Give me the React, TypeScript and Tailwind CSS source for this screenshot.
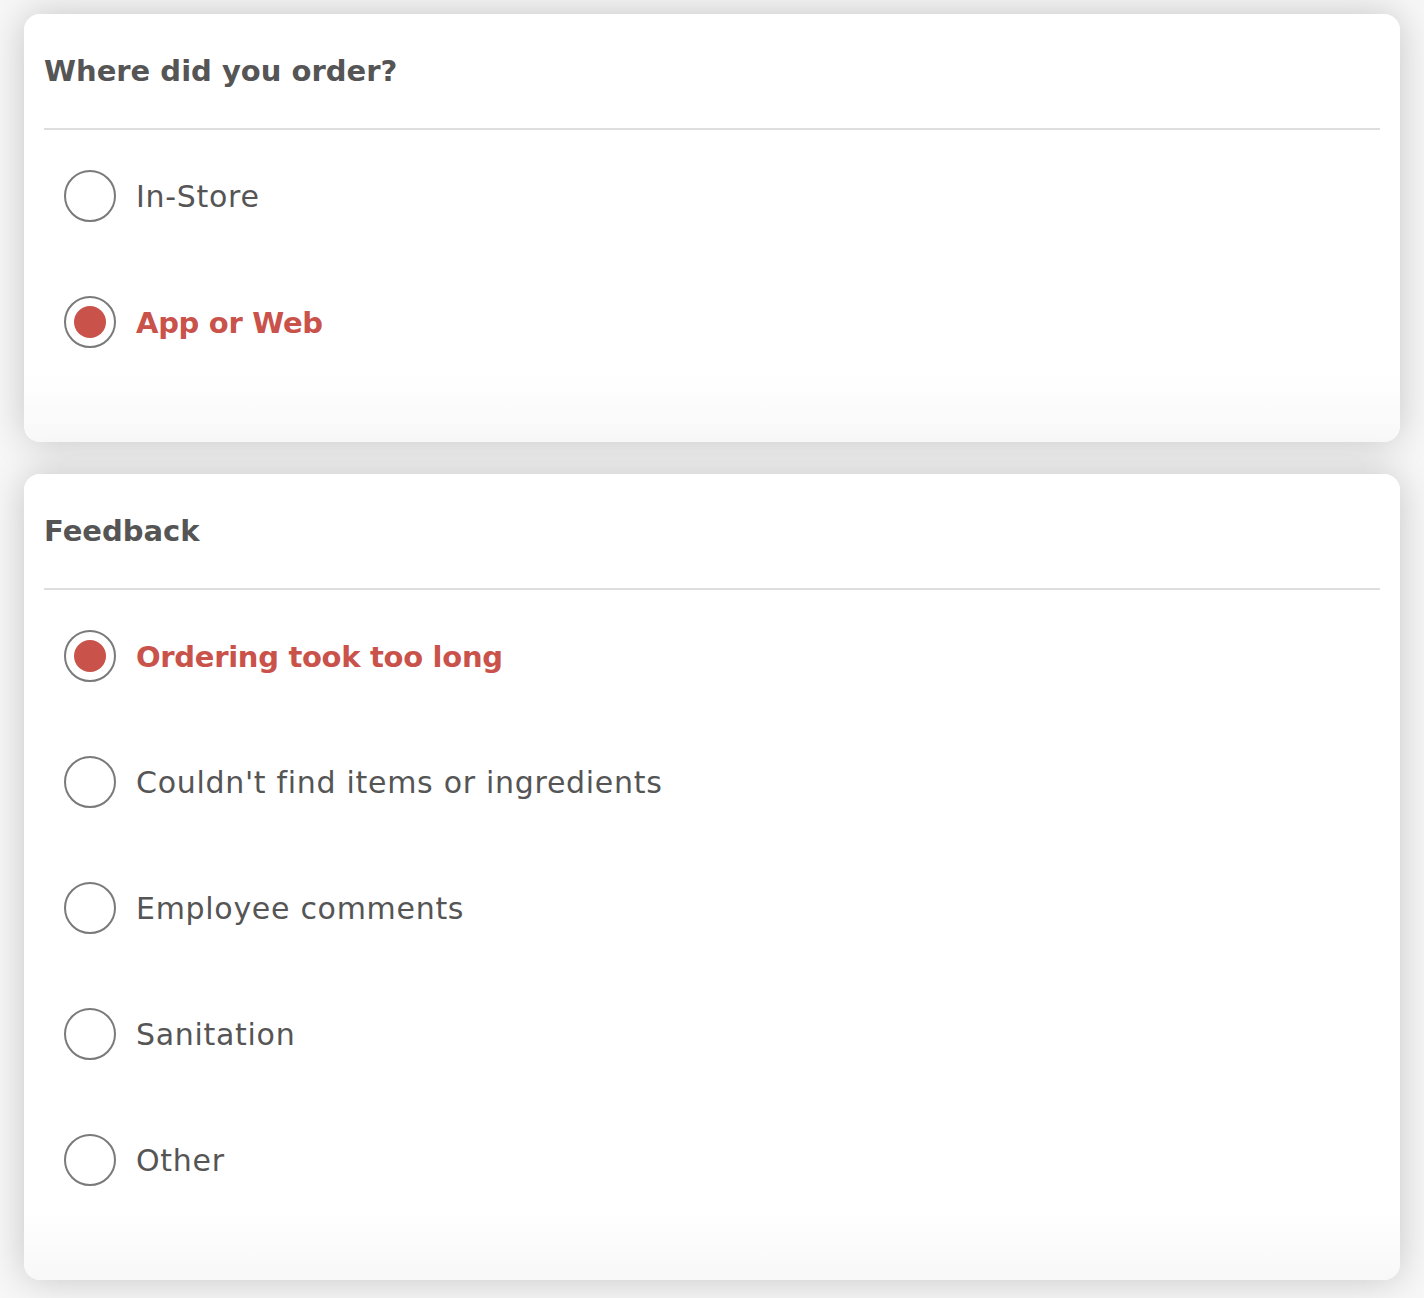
import { useState } from "react";

type Section = {
  title: string;
  options: string[];
  initial: string;
};

const sections: Section[] = [
  {
    title: "Where did you order?",
    options: ["In-Store", "App or Web"],
    initial: "App or Web",
  },
  {
    title: "Feedback",
    options: [
      "Ordering took too long",
      "Couldn't find items or ingredients",
      "Employee comments",
      "Sanitation",
      "Other",
    ],
    initial: "Ordering took too long",
  },
];

function RadioCard({ section }: { section: Section }) {
  const [selected, setSelected] = useState(section.initial);

  return (
    <div className="rounded-2xl bg-[linear-gradient(to_bottom,#ffffff_calc(100%-70px),#f8f8f8)] px-5 shadow-[0_0_38px_rgba(0,0,0,0.2)]">
      <h2 className="pt-[39px] pb-[40px] text-[29px] leading-[36px] font-bold text-[#555555]">
        {section.title}
      </h2>
      <div className="-mt-px h-[2px] bg-[#dedede]" />
      <ul className="flex flex-col gap-[74px] pt-[40px] pb-[94px] pl-5">
        {section.options.map((option) => {
          const active = option === selected;
          return (
            <li key={option}>
              <button
                type="button"
                onClick={() => setSelected(option)}
                className="flex h-[52px] cursor-pointer items-center gap-5 text-left"
              >
                <span className="flex size-[52px] shrink-0 items-center justify-center rounded-full border-2 border-[#7a7a7a] bg-white">
                  {active && <span className="size-[32px] rounded-full bg-[#c9524a]" />}
                </span>
                <span
                  className={
                    active
                      ? "pt-[3px] text-[29px] font-bold tracking-[-0.3px] text-[#c9524a]"
                      : "text-[30px] font-normal tracking-[0.7px] text-[#555555]"
                  }
                >
                  {option}
                </span>
              </button>
            </li>
          );
        })}
      </ul>
    </div>
  );
}

export default function App() {
  return (
    <div className="min-h-[1298px] bg-[#f7f7f7] px-6 pt-[14px] pb-[18px] font-['DejaVu_Sans',sans-serif]">
      <div className="flex flex-col gap-8">
        {sections.map((section) => (
          <RadioCard key={section.title} section={section} />
        ))}
      </div>
    </div>
  );
}
